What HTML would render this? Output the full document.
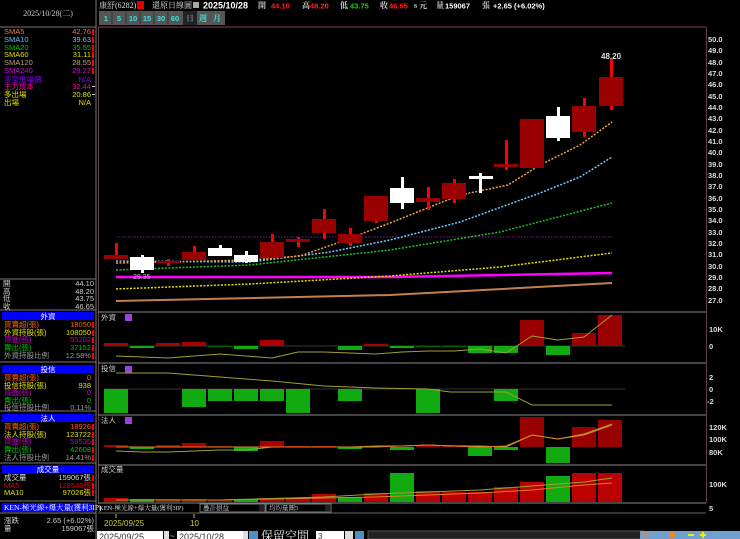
<!DOCTYPE html>
<html><head><meta charset="utf-8"><style>
html,body{margin:0;padding:0;background:#000;width:740px;height:539px;overflow:hidden}
svg{display:block}
text{font-family:"Liberation Sans","Noto Sans CJK TC",sans-serif;font-size:7.5px}
.c{font-family:"Liberation Serif","Noto Serif CJK SC",serif;font-size:8px}
.ax{fill:#ddd;font-size:8px;font-weight:bold}
</style></head><body>
<svg width="740" height="539" viewBox="0 0 740 539" xmlns="http://www.w3.org/2000/svg">
<rect width="740" height="539" fill="#000"/>
<g stroke="#777" fill="none">
<line x1="96" y1="0" x2="96" y2="539"/>
<line x1="0" y1="27" x2="96" y2="27"/>
<line x1="0" y1="279" x2="96" y2="279"/>
<line x1="0" y1="310" x2="96" y2="310"/>
<line x1="0" y1="362" x2="96" y2="362"/>
<line x1="0" y1="411" x2="96" y2="411"/>
<line x1="0" y1="463" x2="96" y2="463"/>
<line x1="0" y1="501" x2="96" y2="501"/>
<line x1="0" y1="513" x2="96" y2="513"/>
</g>
<text x="48" y="16" fill="#ccc" text-anchor="middle" class="c">2025/10/28(二)</text>
<g class="c">
<text x="4" y="34" fill="#e08040">SMA5</text><text x="91" y="34" fill="#e08040" text-anchor="end">42.76</text>
<text x="4" y="42" fill="#60c0ff">SMA10</text><text x="91" y="42" fill="#60c0ff" text-anchor="end">39.63</text>
<text x="4" y="50" fill="#00c000">SMA20</text><text x="91" y="50" fill="#00c000" text-anchor="end">35.55</text>
<text x="4" y="57" fill="#e0e000">SMA60</text><text x="91" y="57" fill="#e0e000" text-anchor="end">31.11</text>
<text x="4" y="65" fill="#c0a080">SMA120</text><text x="91" y="65" fill="#c0a080" text-anchor="end">28.55</text>
<text x="4" y="73" fill="#e000e0">SMA240</text><text x="91" y="73" fill="#e000e0" text-anchor="end">29.27</text>
<text x="4" y="82" fill="#8000ff">多空進場價</text><text x="91" y="82" fill="#8000ff" text-anchor="end">N/A</text>
<text x="4" y="89" fill="#ff00a0">主力成本</text><text x="91" y="89" fill="#ff00a0" text-anchor="end">32.44</text>
<text x="4" y="97" fill="#e0e000">多出場</text><text x="91" y="97" fill="#e0e000" text-anchor="end">20.86</text>
<text x="4" y="105" fill="#e0e000">出場</text><text x="91" y="105" fill="#e0e000" text-anchor="end">N/A</text>
</g>
<g fill="#f00"><rect x="92" y="29" width="2" height="6"/><rect x="92" y="37" width="2" height="6"/><rect x="92" y="45" width="2" height="6"/><rect x="92" y="52" width="2" height="6"/><rect x="92" y="60" width="2" height="6"/><rect x="92" y="68" width="2" height="6"/></g>
<g fill="#ccc"><rect x="92" y="86" width="3" height="1"/><rect x="92" y="94" width="3" height="1"/></g>
<g class="c" fill="#ccc">
<text x="3" y="286">開</text><text x="94" y="286" text-anchor="end">44.10</text>
<text x="3" y="294">高</text><text x="94" y="294" text-anchor="end">48.20</text>
<text x="3" y="301">低</text><text x="94" y="301" text-anchor="end">43.75</text>
<text x="3" y="309">收</text><text x="94" y="309" text-anchor="end">46.65</text>
</g>
<g fill="#0000ff"><rect x="2" y="312" width="92" height="8"/><rect x="2" y="365" width="92" height="8"/><rect x="2" y="414" width="92" height="8"/><rect x="2" y="465" width="92" height="8"/><rect x="2" y="503" width="92" height="9"/></g>
<g class="c" fill="#fff" text-anchor="middle"><text x="48" y="319">外資</text><text x="48" y="372">投信</text><text x="48" y="421">法人</text><text x="48" y="472">成交量</text></g>
<text x="4" y="510" fill="#fff" class="c" style="font-size:7.5px">KEN-極光線+爆大量(獲利3IP)</text>
<g class="c">
<text x="4" y="327" fill="#ff6000">買賣超(張)</text><text x="91" y="327" fill="#ff6000" text-anchor="end">18050</text>
<text x="4" y="335" fill="#e0e000">外資持股(張)</text><text x="91" y="335" fill="#e0e000" text-anchor="end">108050</text>
<text x="4" y="342" fill="#c000c0">買進(張)</text><text x="91" y="342" fill="#c000c0" text-anchor="end">55202</text>
<text x="4" y="350" fill="#00c000">賣出(張)</text><text x="91" y="350" fill="#00c000" text-anchor="end">37152</text>
<text x="4" y="358" fill="#999">外資持股比例</text><text x="91" y="358" fill="#999" text-anchor="end">12.58%</text>
<text x="4" y="380" fill="#ff6000">買賣超(張)</text><text x="91" y="380" fill="#ff6000" text-anchor="end">0</text>
<text x="4" y="388" fill="#e0e000">投信持股(張)</text><text x="91" y="388" fill="#e0e000" text-anchor="end">938</text>
<text x="4" y="395" fill="#c000c0">買進(張)</text><text x="91" y="395" fill="#c000c0" text-anchor="end">0</text>
<text x="4" y="403" fill="#00c000">賣出(張)</text><text x="91" y="403" fill="#00c000" text-anchor="end">0</text>
<text x="4" y="410" fill="#999">投信持股比例</text><text x="91" y="410" fill="#999" text-anchor="end">0.11%</text>
<text x="4" y="429" fill="#ff6000">買賣超(張)</text><text x="91" y="429" fill="#ff6000" text-anchor="end">18926</text>
<text x="4" y="437" fill="#e0e000">法人持股(張)</text><text x="91" y="437" fill="#e0e000" text-anchor="end">123722</text>
<text x="4" y="444" fill="#c000c0">買進(張)</text><text x="91" y="444" fill="#c000c0" text-anchor="end">59535</text>
<text x="4" y="452" fill="#00c000">賣出(張)</text><text x="91" y="452" fill="#00c000" text-anchor="end">42608</text>
<text x="4" y="460" fill="#999">法人持股比例</text><text x="91" y="460" fill="#999" text-anchor="end">14.41%</text>
<text x="4" y="480" fill="#ddd">成交量</text><text x="91" y="480" fill="#ddd" text-anchor="end">159067張</text>
<text x="4" y="488" fill="#e00000">MA5</text><text x="91" y="488" fill="#e00000" text-anchor="end">128540張</text>
<text x="4" y="495" fill="#e0e000">MA10</text><text x="91" y="495" fill="#e0e000" text-anchor="end">97026張</text>
<text x="4" y="523" fill="#ccc">漲跌</text><text x="94" y="523" fill="#ccc" text-anchor="end">2.65 (+6.02%)</text>
<text x="4" y="531" fill="#ccc">量</text><text x="94" y="531" fill="#ccc" text-anchor="end">159067張</text>
</g>
<g fill="#f00"><rect x="92" y="322" width="2" height="6"/><rect x="92" y="330" width="2" height="6"/><rect x="92" y="337" width="2" height="6"/><rect x="92" y="345" width="2" height="6"/><rect x="92" y="353" width="2" height="6"/><rect x="92" y="424" width="2" height="6"/><rect x="92" y="432" width="2" height="6"/><rect x="92" y="439" width="2" height="6"/><rect x="92" y="447" width="2" height="6"/><rect x="92" y="455" width="2" height="6"/><rect x="92" y="475" width="2" height="6"/><rect x="92" y="483" width="2" height="6"/><rect x="92" y="490" width="2" height="6"/></g>

<text x="99" y="8" fill="#ddd" class="c">康舒(6282)</text>
<rect x="137" y="1" width="7" height="8" fill="#e00000"/>
<text x="152" y="8" fill="#ddd" class="c">還原日線圖</text>
<rect x="193" y="2" width="6" height="6" fill="#aaa"/>
<text x="203" y="8.5" fill="#fff" style="font-size:9px;font-weight:bold">2025/10/28</text>
<g style="font-size:8px;font-weight:bold">
<text x="258" y="8" fill="#ccc" class="c">開</text><text x="271" y="8.5" fill="#f22">44.10</text>
<text x="302" y="8" fill="#ccc" class="c">高</text><text x="310" y="8.5" fill="#f22">48.20</text>
<text x="340" y="8" fill="#ccc" class="c">低</text><text x="350" y="8.5" fill="#2c2">43.75</text>
<text x="380" y="8" fill="#ccc" class="c">收</text><text x="389" y="8.5" fill="#f22">46.65</text>
<text x="414" y="8" fill="#ccc" class="c">s 元</text>
<text x="436" y="8" fill="#ccc" class="c">量</text><text x="445" y="8.5" fill="#fff">159067</text><text x="482" y="8" fill="#ccc" class="c">張</text>
<text x="493" y="8.5" fill="#fff">+2.65 (+6.02%)</text>
</g>
<rect x="99" y="11" width="126" height="14" fill="#555"/>
<rect x="183" y="11" width="14" height="14" fill="#222"/>
<g fill="#4dd" style="font-size:8.5px;font-weight:bold" text-anchor="middle">
<text x="106" y="21">1</text><text x="119" y="21">5</text><text x="133" y="21">10</text><text x="147" y="21">15</text><text x="161" y="21">30</text><text x="175" y="21">60</text>
<text x="190" y="21" fill="#777" class="c">日</text><text x="203" y="21" class="c">週</text><text x="217" y="21" class="c">月</text>
</g>
<g stroke="#333"><line x1="112" y1="12" x2="112" y2="24"/><line x1="126" y1="12" x2="126" y2="24"/><line x1="140" y1="12" x2="140" y2="24"/><line x1="154" y1="12" x2="154" y2="24"/><line x1="168" y1="12" x2="168" y2="24"/></g>

<line x1="98" y1="27" x2="706" y2="27" stroke="#804060"/>
<line x1="98.5" y1="27" x2="98.5" y2="503" stroke="#604050"/>
<line x1="706.5" y1="27" x2="706.5" y2="503" stroke="#604050"/>
<g stroke="#888"><line x1="98" y1="312" x2="706" y2="312"/><line x1="98" y1="363" x2="706" y2="363"/><line x1="98" y1="415" x2="706" y2="415"/><line x1="98" y1="465" x2="706" y2="465"/><line x1="98" y1="503" x2="706" y2="503"/></g>

<g class="ax">
<text x="708" y="42">50.0</text><text x="708" y="53">49.0</text><text x="708" y="65">48.0</text><text x="708" y="76">47.0</text><text x="708" y="87">46.0</text><text x="708" y="99">45.0</text><text x="708" y="110">44.0</text><text x="708" y="121">43.0</text><text x="708" y="133">42.0</text><text x="708" y="144">41.0</text><text x="708" y="155">40.0</text><text x="708" y="167">39.0</text><text x="708" y="178">38.0</text><text x="708" y="189">37.0</text><text x="708" y="201">36.0</text><text x="708" y="212">35.0</text><text x="708" y="223">34.0</text><text x="708" y="235">33.0</text><text x="708" y="246">32.0</text><text x="708" y="257">31.0</text><text x="708" y="269">30.0</text><text x="708" y="280">29.0</text><text x="708" y="291">28.0</text><text x="708" y="303">27.0</text>
<text x="709" y="332">10K</text><text x="709" y="349">0</text>
<text x="709" y="380">2</text><text x="709" y="392">0</text><text x="707" y="404">-2</text>
<text x="709" y="430">120K</text><text x="709" y="442">100K</text><text x="709" y="455">80K</text>
<text x="709" y="487">100K</text><text x="709" y="511">5</text>
</g>

<line x1="116" y1="237" x2="612" y2="237" stroke="#7020a0" stroke-dasharray="1.5 1.5"/>
<polyline fill="none" stroke="#c08050" stroke-width="2" points="116,301 390,295 612,283"/>
<polyline fill="none" stroke="#ff00ff" stroke-width="2.5" points="116,277 390,277 612,273"/>
<polyline fill="none" stroke="#e0e000" stroke-width="1.5" stroke-dasharray="2 1.5" points="116,289 250,284 390,276 500,267 612,253"/>
<polyline fill="none" stroke="#20c020" stroke-width="1.5" stroke-dasharray="2 1.5" points="116,270 250,265 390,250 500,232 612,203"/>
<polyline fill="none" stroke="#70c8ff" stroke-width="1.5" stroke-dasharray="2 1.5" points="116,261 250,262 330,252 390,240 460,222 540,193 580,177 612,157"/>
<polyline fill="none" stroke="#f0a040" stroke-width="1.5" stroke-dasharray="2 1.5" points="116,263 170,262 250,260 300,256 340,242 390,223 460,195 508,185 540,165 580,145 612,122"/>

<g>
<rect x="115" y="243" width="3" height="16" fill="#f00"/><rect x="104" y="255" width="24" height="4" fill="#900"/>
<rect x="141" y="255" width="3" height="18" fill="#fff"/><rect x="130" y="257" width="24" height="13" fill="#fff"/>
<rect x="167" y="259" width="3" height="7" fill="#f00"/><rect x="156" y="261" width="24" height="2" fill="#900"/>
<rect x="193" y="246" width="3" height="14" fill="#f00"/><rect x="182" y="252" width="24" height="8" fill="#900"/>
<rect x="219" y="245" width="3" height="11" fill="#fff"/><rect x="208" y="248" width="24" height="8" fill="#fff"/>
<rect x="245" y="251" width="3" height="12" fill="#fff"/><rect x="234" y="255" width="24" height="7" fill="#fff"/>
<rect x="271" y="234" width="3" height="24" fill="#f00"/><rect x="260" y="242" width="24" height="16" fill="#900"/>
<rect x="297" y="237" width="3" height="10" fill="#f00"/><rect x="286" y="239" width="24" height="3" fill="#900"/>
<rect x="323" y="209" width="3" height="30" fill="#f00"/><rect x="312" y="219" width="24" height="14" fill="#900"/>
<rect x="349" y="228" width="3" height="18" fill="#f00"/><rect x="338" y="234" width="24" height="9" fill="#900"/>
<rect x="375" y="196" width="3" height="27" fill="#f00"/><rect x="364" y="196" width="24" height="25" fill="#900"/>
<rect x="401" y="177" width="3" height="32" fill="#fff"/><rect x="390" y="188" width="24" height="15" fill="#fff"/>
<rect x="427" y="187" width="3" height="23" fill="#f00"/><rect x="416" y="198" width="24" height="4" fill="#900"/>
<rect x="453" y="179" width="3" height="24" fill="#f00"/><rect x="442" y="183" width="24" height="16" fill="#900"/>
<rect x="479" y="173" width="3" height="20" fill="#fff"/><rect x="469" y="176" width="24" height="3" fill="#fff"/>
<rect x="505" y="140" width="3" height="30" fill="#f00"/><rect x="494" y="164" width="24" height="3" fill="#900"/>
<rect x="531" y="119" width="3" height="49" fill="#f00"/><rect x="520" y="119" width="24" height="49" fill="#900"/>
<rect x="557" y="107" width="3" height="34" fill="#fff"/><rect x="546" y="116" width="24" height="22" fill="#fff"/>
<rect x="583" y="98" width="3" height="39" fill="#f00"/><rect x="572" y="106" width="24" height="26" fill="#900"/>
<rect x="610" y="59" width="3" height="51" fill="#f00"/><rect x="599" y="77" width="24" height="29" fill="#900"/>
</g>
<text x="601" y="59" fill="#ddd" style="font-size:8px;font-weight:bold">48.20</text>
<text x="133" y="279" fill="#bbb" style="font-size:7px">29.35</text>

<g class="c" fill="#ccc"><text x="101" y="320">外資</text><text x="101" y="371">投信</text><text x="101" y="423">法人</text><text x="101" y="472">成交量</text></g>
<g fill="#a040e0"><rect x="125" y="314" width="7" height="7"/><rect x="125" y="366" width="7" height="7"/><rect x="125" y="417" width="7" height="7"/></g>

<line x1="104" y1="346" x2="625" y2="346" stroke="#333"/>
<g>
<rect x="104" y="343" width="24" height="3" fill="#a00"/>
<rect x="130" y="346" width="24" height="2" fill="#1a1"/>
<rect x="156" y="343" width="24" height="3" fill="#a00"/>
<rect x="182" y="342" width="24" height="4" fill="#a00"/>
<rect x="208" y="346" width="24" height="1" fill="#060"/>
<rect x="234" y="346" width="24" height="3" fill="#1a1"/>
<rect x="260" y="340" width="24" height="6" fill="#a00"/>
<rect x="286" y="345" width="24" height="1" fill="#600"/>
<rect x="312" y="345" width="24" height="1" fill="#600"/>
<rect x="338" y="346" width="24" height="4" fill="#1a1"/>
<rect x="364" y="344" width="24" height="2" fill="#a00"/>
<rect x="390" y="346" width="24" height="2" fill="#1a1"/>
<rect x="416" y="346" width="24" height="1" fill="#060"/>
<rect x="442" y="346" width="24" height="1" fill="#060"/>
<rect x="468" y="346" width="24" height="7" fill="#1a1"/>
<rect x="494" y="346" width="24" height="7" fill="#1a1"/>
<rect x="520" y="320" width="24" height="26" fill="#900"/>
<rect x="546" y="346" width="24" height="9" fill="#1a1"/>
<rect x="572" y="333" width="24" height="13" fill="#900"/>
<rect x="598" y="315" width="24" height="31" fill="#900"/>
</g>
<polyline fill="none" stroke="#a0a030" points="116,356 142,357 168,358 194,356 220,354 246,356 272,358 298,352 324,352 350,353 376,354 402,352 428,351 454,351 480,349 506,353 532,336 558,340 584,337 612,315"/>
<line x1="104" y1="389" x2="625" y2="389" stroke="#333"/>
<g fill="#1a1">
<rect x="104" y="389" width="24" height="24"/>
<rect x="182" y="389" width="24" height="18"/>
<rect x="208" y="389" width="24" height="12"/>
<rect x="234" y="389" width="24" height="12"/>
<rect x="260" y="389" width="24" height="12"/>
<rect x="286" y="389" width="24" height="24"/>
<rect x="338" y="389" width="24" height="12"/>
<rect x="416" y="389" width="24" height="24"/>
<rect x="494" y="389" width="24" height="12"/>
</g>
<polyline fill="none" stroke="#a0a030" points="116,373 168,373 220,377 272,381 324,386 376,388 428,389 450,392 506,392 532,405 612,405"/>
<g>
<rect x="104" y="445" width="24" height="2" fill="#a00"/>
<rect x="130" y="447" width="24" height="2" fill="#1a1"/>
<rect x="156" y="445" width="24" height="2" fill="#a00"/>
<rect x="182" y="443" width="24" height="4" fill="#a00"/>
<rect x="208" y="446" width="24" height="1" fill="#600"/>
<rect x="234" y="447" width="24" height="4" fill="#1a1"/>
<rect x="260" y="441" width="24" height="6" fill="#a00"/>
<rect x="286" y="446" width="24" height="1" fill="#a00"/>
<rect x="312" y="446" width="24" height="1" fill="#a00"/>
<rect x="338" y="447" width="24" height="2" fill="#1a1"/>
<rect x="364" y="446" width="24" height="1" fill="#a00"/>
<rect x="390" y="447" width="24" height="3" fill="#1a1"/>
<rect x="416" y="446" width="24" height="1" fill="#a00"/>
<rect x="442" y="445" width="24" height="2" fill="#a00"/>
<rect x="468" y="447" width="24" height="9" fill="#1a1"/>
<rect x="494" y="447" width="24" height="3" fill="#1a1"/>
<rect x="520" y="417" width="24" height="30" fill="#900"/>
<rect x="546" y="447" width="24" height="16" fill="#1a1"/>
<rect x="572" y="427" width="24" height="20" fill="#900"/>
<rect x="598" y="420" width="24" height="27" fill="#900"/>
</g>
<polyline fill="none" stroke="#a0a030" points="116,451 142,452 168,452 194,451 220,450 246,450 272,447 298,447 324,447 350,447 376,446 402,446 428,445 454,446 480,446 506,447 532,435 558,439 584,434 612,424"/>
<polyline fill="none" stroke="#e08020" points="116,447 168,447 220,447 272,447 324,447 376,447 402,446 428,445 454,446 480,447 506,446 532,435 558,439 584,435 612,425"/>
<g>
<rect x="104" y="498" width="24" height="4" fill="#b00"/>
<rect x="130" y="499" width="24" height="3" fill="#1a1"/>
<rect x="156" y="499" width="24" height="3" fill="#b00"/>
<rect x="182" y="499" width="24" height="3" fill="#b00"/>
<rect x="208" y="500" width="24" height="2" fill="#800"/>
<rect x="234" y="499" width="24" height="3" fill="#1a1"/>
<rect x="260" y="498" width="24" height="4" fill="#b00"/>
<rect x="286" y="498" width="24" height="4" fill="#b00"/>
<rect x="312" y="494" width="24" height="8" fill="#b00"/>
<rect x="338" y="497" width="24" height="5" fill="#1a1"/>
<rect x="364" y="493" width="24" height="9" fill="#b00"/>
<rect x="390" y="473" width="24" height="29" fill="#1a1"/>
<rect x="416" y="491" width="24" height="11" fill="#b00"/>
<rect x="442" y="492" width="24" height="10" fill="#b00"/>
<rect x="468" y="492" width="24" height="10" fill="#b00"/>
<rect x="494" y="487" width="24" height="15" fill="#b00"/>
<rect x="520" y="482" width="24" height="20" fill="#b00"/>
<rect x="546" y="476" width="24" height="26" fill="#1a1"/>
<rect x="572" y="473" width="24" height="29" fill="#b00"/>
<rect x="598" y="473" width="24" height="29" fill="#b00"/>
</g>
<polyline fill="none" stroke="#e08020" points="116,500 220,500 324,498 376,497 428,495 480,493 532,490 584,485 612,483"/>
<polyline fill="none" stroke="#a0a030" points="116,500 220,500 324,497 376,494 428,492 480,490 532,486 584,482 612,478"/>

<line x1="98" y1="513" x2="706" y2="513" stroke="#666"/>
<text x="99" y="510" fill="#ddd" class="c" style="font-size:6.5px">KEN-極光線+爆大量(獲利3IP)</text>
<rect x="200" y="504" width="65" height="8" fill="#000" stroke="#777"/><text x="203" y="510" fill="#ccc" class="c" style="font-size:6.5px">疊計損益</text><rect x="259" y="505" width="5" height="6" fill="#222"/>
<rect x="266" y="504" width="65" height="8" fill="#000" stroke="#777"/><text x="269" y="510" fill="#ccc" class="c" style="font-size:6.5px">均均量圖5</text><rect x="325" y="505" width="5" height="6" fill="#222"/>
<g stroke="#cc3"><line x1="116" y1="514" x2="116" y2="518"/><line x1="194" y1="514" x2="194" y2="518"/></g>
<text x="104" y="526" fill="#cc3" style="font-size:8px">2025/09/25</text>
<text x="190" y="526" fill="#cc3" style="font-size:8px">10</text>
<rect x="97" y="531" width="66" height="10" fill="#fff"/><text x="99" y="540" fill="#333" style="font-size:9px">2025/09/25</text><rect x="164" y="531" width="5" height="8" fill="#ddd"/>
<text x="170" y="539" fill="#ccc" style="font-size:8px">~</text>
<rect x="177" y="531" width="66" height="10" fill="#fff"/><text x="179" y="540" fill="#333" style="font-size:9px">2025/10/28</text><rect x="243" y="531" width="5" height="8" fill="#ddd"/>
<rect x="249" y="531" width="9" height="8" fill="#5090c0"/>
<text x="261" y="540" fill="#eee" class="c" style="font-size:12px">保留空間</text>
<rect x="316" y="531" width="28" height="9" fill="#fff"/><text x="318" y="539" fill="#333" style="font-size:8px">3</text>
<rect x="345" y="531" width="8" height="8" fill="#ddd"/><rect x="355" y="531" width="9" height="8" fill="#5090c0"/>
<rect x="368" y="531" width="276" height="8" fill="#222" stroke="#555"/>
<rect x="640" y="531" width="100" height="8" fill="#70a0d0"/>
<rect x="641" y="532" width="8" height="6" fill="#999"/>
<circle cx="672" cy="535" r="3" fill="#f80"/>
<rect x="688" y="534" width="6" height="2" fill="#ee0"/><rect x="700" y="534" width="6" height="2" fill="#ee0"/><rect x="702" y="532" width="2" height="6" fill="#ee0"/>
</svg>
</body></html>
